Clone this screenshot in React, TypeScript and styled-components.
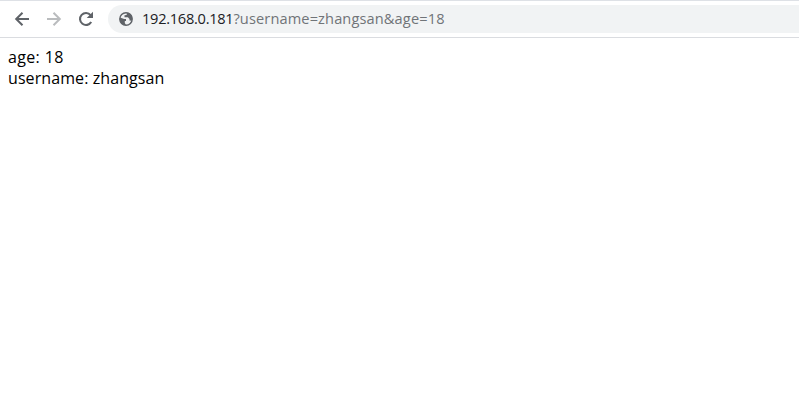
import React from 'react';
import styled, { createGlobalStyle } from 'styled-components';

const Global = createGlobalStyle`
  html, body { margin: 0; background: #fff; overflow: hidden; }
`;
const Window = styled.div`
  height: 415px;
  overflow: hidden;
  font-family: "Open Sans", "Noto Sans", sans-serif;
`;
const Toolbar = styled.header`
  box-sizing: border-box;
  height: 38px;
  display: flex;
  align-items: center;
  padding-left: 12px;
  border-top: 1px solid #dee1e6;
  border-bottom: 1px solid #dadce0;
`;
const NavButton = styled.button<{ $muted?: boolean }>`
  all: unset;
  display: flex;
  width: 20px;
  height: 20px;
  margin-right: 12px;
  color: ${(p) => (p.$muted ? '#babcbe' : '#5f6368')};
`;
const AddressBar = styled.div`
  flex: 1;
  display: flex;
  align-items: center;
  height: 28px;
  padding-left: 10px;
  gap: 8px;
  border-radius: 14px 0 0 14px;
  background: #f1f3f4;
  color: #5f6368;
`;
const Url = styled.span`
  margin-bottom: 2px;
  font-size: 14.6px;
  line-height: 20px;
  white-space: nowrap;
  letter-spacing: 0.12px;
  color: #707478;
`;
const Host = styled.span`
  letter-spacing: -0.27px;
  color: #202124;
`;
const Page = styled.main`
  padding: 9px 8px;
  font-size: 16px;
  line-height: 21px;
  color: #000;
`;
const Line = styled.div<{ $spacing: string }>`
  white-space: nowrap;
  letter-spacing: ${(p) => p.$spacing};
`;

const ArrowIcon = ({ forward = false }: { forward?: boolean }) => (
  <svg width="20" height="20" viewBox="0 0 20 20" fill="none" stroke="currentColor" strokeWidth="2">
    {forward ? (
      <path d="M3 10h12.5M9.5 3.7 15.8 10l-6.3 6.3" />
    ) : (
      <path d="M17 10H4.5M10.5 3.7 4.2 10l6.3 6.3" />
    )}
  </svg>
);
const ReloadIcon = () => (
  <svg width="20" height="20" viewBox="0 0 20 20">
    <path d="M15.2 13A6 6 0 1 1 14.6 6.1" fill="none" stroke="currentColor" strokeWidth="2.1" />
    <path d="M17 2.7V9h-6.3z" fill="currentColor" />
  </svg>
);
const GlobeIcon = () => (
  <svg width="16" height="16" viewBox="0 0 16 16">
    <circle cx="8" cy="8" r="6.2" fill="none" stroke="currentColor" strokeWidth="1.4" />
    <path
      d="M2 6.5 6.2 8.1H8v2H6.8v1.8L8 14C4.5 14.3 1.6 11.5 1.7 8zM9 1.8 8.6 4 6.5 4.3v2h3.4l1.6 1.6v1.7l2.2.2C15.5 5.8 13 2 9 1.8z"
      fill="currentColor"
    />
  </svg>
);

export default function App() {
  return (
    <Window>
      <Global />
      <Toolbar>
        <NavButton aria-label="Back"><ArrowIcon /></NavButton>
        <NavButton aria-label="Forward" $muted><ArrowIcon forward /></NavButton>
        <NavButton aria-label="Reload"><ReloadIcon /></NavButton>
        <AddressBar>
          <GlobeIcon />
          <Url><Host>192.168.0.181</Host>?username=zhangsan&amp;age=18</Url>
        </AddressBar>
      </Toolbar>
      <Page>
        <Line $spacing="0.35px">age: 18</Line>
        <Line $spacing="0.09px">username: zhangsan</Line>
      </Page>
    </Window>
  );
}
